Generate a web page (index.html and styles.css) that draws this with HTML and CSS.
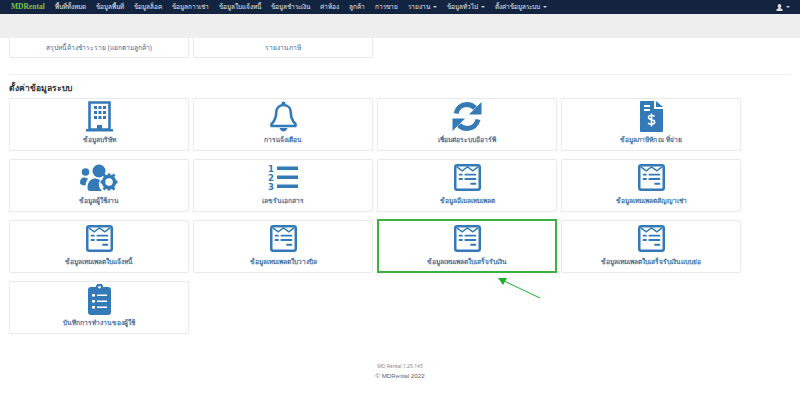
FILE: index.html
```html
<!DOCTYPE html>
<html lang="th">

<head>
    <meta charset="UTF-8">
    <meta name="viewport" content="width=device-width, initial-scale=1.0">
    <title>MDRental</title>
    <link rel="stylesheet" href="styles.css">
</head>

<body>
    <svg class="defs" width="0" height="0">
        <symbol id="tpl" viewBox="0 0 28 28">
            <rect x="1.300" y="1.300" width="25.400" height="25.400" rx="2" fill="none" stroke="#337ab7" stroke-width="2.600"/>
            <path d="M3 3l5.500 4 5.500-4 5.500 4L25 3" fill="none" stroke="#337ab7" stroke-width="1.600"/>
            <path d="M5 10h4v2H5zM11 10h12v2H11zM5 14.500h4v2H5zM11 14.500h12v2H11zM17 19.500h6v2h-6z" fill="#337ab7"/>
        </symbol>
    </svg>

    <nav class="navbar">
        <a class="brand">MDRental</a>
        <a>พื้นที่ทั้งหมด</a>
        <a>ข้อมูลพื้นที่</a>
        <a>ข้อมูลล็อค</a>
        <a>ข้อมูลการเช่า</a>
        <a>ข้อมูลใบแจ้งหนี้</a>
        <a>ข้อมูลชำระเงิน</a>
        <a>ค่าห้อง</a>
        <a>ลูกค้า</a>
        <a>การขาย</a>
        <a class="caret">รายงาน</a>
        <a class="caret">ข้อมูลทั่วไป</a>
        <a class="caret">ตั้งค่าข้อมูลระบบ</a>
        <a class="caret user">
            <svg width="7" height="7" viewBox="0 0 14 14"><path d="M7 0a3.500 3.500 0 0 1 3.500 3.800c0 2-1 3.200-1.500 3.700v1l4 2v3.500H1V10.500l4-2v-1C4.500 7 3.500 5.800 3.500 3.800A3.500 3.500 0 0 1 7 0z" fill="#ddd"/></svg>
        </a>
    </nav>
    <div class="subbar"></div>

    <main class="content">
        <div class="grid cut">
            <a class="card">สรุปหนี้ค้างชำระราย (แยกตามลูกค้า)</a>
            <a class="card">รายงานภาษี</a>
        </div>
        <hr class="line">
        <h4 class="title">ตั้งค่าข้อมูลระบบ</h4>
        <div class="grid">
            <a class="card">
                <span class="icon">
                    <svg width="27" height="31" viewBox="0 0 27 31">
                        <path d="M3.500 1.500h20v27h-20z" fill="none" stroke="#337ab7" stroke-width="2.600"/>
                        <path d="M0 28h27v2.500H0z" fill="#337ab7"/>
                        <path d="M8 5h3v3H8zM12.500 5h3v3h-3zM17 5h3v3h-3zM8 10h3v3H8zM12.500 10h3v3h-3zM17 10h3v3h-3zM8 15h3v3H8zM12.500 15h3v3h-3zM17 15h3v3h-3zM11 24h5v5h-5z" fill="#337ab7"/>
                    </svg>
                </span>
                ข้อมูลบริษัท
            </a>
            <a class="card">
                <span class="icon">
                    <svg width="27" height="31" viewBox="0 0 27 31">
                        <path d="M13.500 4c-4.700 0-7.300 3.500-7.300 7.500 0 6-2 9-4.700 11.500v2h24v-2c-2.700-2.500-4.700-5.500-4.700-11.500C20.800 7.500 18.200 4 13.500 4z" fill="none" stroke="#337ab7" stroke-width="2.600" stroke-linejoin="round"/>
                        <circle cx="13.500" cy="2.500" r="2" fill="#337ab7"/>
                        <path d="M9.500 27h8c-.7 2.300-2.200 3.500-4 3.500s-3.300-1.200-4-3.500z" fill="#337ab7"/>
                    </svg>
                </span>
                การแจ้งเตือน
            </a>
            <a class="card">
                <span class="icon">
                    <svg width="30" height="31" viewBox="0 0 30 31">
                        <path d="M4 12.500C5.200 7 9.500 3.500 15 3.500c3.300 0 6 1.300 8 3.500" fill="none" stroke="#337ab7" stroke-width="5"/>
                        <path d="M29.500 1v12.500H17z" fill="#337ab7"/>
                        <path d="M26 18.500c-1.200 5.500-5.500 9-11 9-3.300 0-6-1.300-8-3.500" fill="none" stroke="#337ab7" stroke-width="5"/>
                        <path d="M.5 30V17.500H13z" fill="#337ab7"/>
                    </svg>
                </span>
                เชื่อมต่อระบบอีอาร์พี
            </a>
            <a class="card">
                <span class="icon">
                    <svg width="23" height="31" viewBox="0 0 23 31">
                        <path d="M1 0h13v8h9v22a1 1 0 0 1-1 1H1a1 1 0 0 1-1-1V1a1 1 0 0 1 1-1zM16 0l7 6h-7z" fill="#337ab7"/>
                        <path d="M4 4h6v2H4zM4 8h6v2H4z" fill="#fff"/>
                        <path d="M14.500 15.500c-.6-.9-1.600-1.300-3-1.300-1.800 0-3 .8-3 2.100 0 3.200 6.200 1.700 6.200 4.800 0 1.300-1.300 2.200-3.200 2.200-1.500 0-2.700-.5-3.300-1.500M11.500 12.500v13" fill="none" stroke="#fff" stroke-width="1.600"/>
                    </svg>
                </span>
                ข้อมูลภาษีหัก ณ ที่จ่าย
            </a>

            <a class="card">
                <span class="icon">
                    <svg width="38" height="27" viewBox="0 0 38 27">
                        <circle cx="5.500" cy="8" r="3.800" fill="#337ab7"/>
                        <path d="M0 19c0-4 2-5.500 4-5.500 1.500 0 3 .5 4 1.500-1.200 1.500-2.500 4-2.500 6.500C2.500 21.500 0 20.500 0 19z" fill="#337ab7"/>
                        <circle cx="19" cy="7" r="6.500" fill="#337ab7"/>
                        <path d="M7.500 24c0-6 3.500-9.500 7-9.500 2 0 4 .7 5.500 1.500-1.500 2.500-1.500 6 0 8.500l2 2.500H10c-1.500 0-2.500-1-2.500-3z" fill="#337ab7"/>
                        <circle cx="29" cy="18" r="5.500" fill="none" stroke="#337ab7" stroke-width="3.500"/>
                        <path d="M27.500 9.500h3v3h-3zM27.500 23.500h3v3h-3zM20.500 16.500h3v3h-3zM34.500 16.500h3v3h-3z" fill="#337ab7"/>
                        <path d="M22.500 11.500l2-2 2.500 2.500-2 2zM31 12l2.500-2.500 2 2-2.500 2.500zM22.500 24.500l2.500-2.500 2 2-2.500 2.500zM31 24l2-2 2.500 2.500-2 2z" fill="#337ab7"/>
                    </svg>
                </span>
                ข้อมูลผู้ใช้งาน
            </a>
            <a class="card">
                <span class="icon">
                    <svg width="30" height="28" viewBox="0 0 30 28">
                        <path d="M9 2.500h21v3.500H9zM9 11.500h21v3.500H9zM9 20.500h21v3.500H9z" fill="#337ab7"/>
                        <text class="num" x="0" y="8">1</text>
                        <text class="num" x="0" y="17">2</text>
                        <text class="num" x="0" y="26">3</text>
                    </svg>
                </span>
                เลขรันเอกสาร
            </a>
            <a class="card">
                <span class="icon"><svg width="27" height="27"><use href="#tpl"/></svg></span>
                ข้อมูลอีเมลเทมเพลต
            </a>
            <a class="card">
                <span class="icon"><svg width="27" height="27"><use href="#tpl"/></svg></span>
                ข้อมูลเทมเพลตสัญญาเช่า
            </a>

            <a class="card">
                <span class="icon"><svg width="27" height="27"><use href="#tpl"/></svg></span>
                ข้อมูลเทมเพลตใบแจ้งหนี้
            </a>
            <a class="card">
                <span class="icon"><svg width="27" height="27"><use href="#tpl"/></svg></span>
                ข้อมูลเทมเพลตใบวางบิล
            </a>
            <a class="card active">
                <span class="icon"><svg width="27" height="27"><use href="#tpl"/></svg></span>
                ข้อมูลเทมเพลตใบเสร็จรับเงิน
            </a>
            <a class="card">
                <span class="icon"><svg width="27" height="27"><use href="#tpl"/></svg></span>
                ข้อมูลเทมเพลตใบเสร็จรับเงินแบบย่อ
            </a>

            <a class="card">
                <span class="icon">
                    <svg width="23" height="31" viewBox="0 0 23 31">
                        <path d="M3 3h5a3.500 3.500 0 0 1 7 0h5a3 3 0 0 1 3 3v22a3 3 0 0 1-3 3H3a3 3 0 0 1-3-3V6a3 3 0 0 1 3-3z" fill="#337ab7"/>
                        <circle cx="11.500" cy="3.300" r="1.300" fill="#fff"/>
                        <path d="M4 10h3v2.500H4zM4 16h3v2.500H4zM4 22h3v2.500H4zM9 10.400h10v1.700H9zM9 16.400h10v1.700H9zM9 22.400h10v1.700H9z" fill="#fff"/>
                    </svg>
                </span>
                บันทึกการทำงานของผู้ใช้
            </a>
        </div>

        <footer class="footer">
            <small>MD Rental 1.25.145</small>
            <p>© MDRental 2022</p>
        </footer>

        <svg class="arrow" width="46" height="24" viewBox="0 0 46 24">
            <path d="M44 22L8 5" stroke="#1fae2b" stroke-width="1"/>
            <path d="M2 2l9 0-4 7z" fill="#1fae2b"/>
        </svg>
    </main>
</body>

</html>
```

FILE: styles.css
```css
html, body {
    margin: 0;
    height: 100%;
    overflow: hidden;
    background: #fff;
    font-family: "Noto Sans", "Liberation Sans", sans-serif;
}

.defs {
    position: absolute;
}

.navbar {
    height: 14px;
    padding: 0 10px 0 11px;
    display: flex;
    align-items: center;
    gap: 10px;
    background: #122440;
    color: #e4e8ee;
    font-size: 6.500px;
    line-height: 14px;
    white-space: nowrap;
}

.brand {
    color: #7fc14e;
    font-family: "Liberation Serif", serif;
    font-weight: bold;
    font-size: 7.500px;
}

.caret::after {
    content: "";
    display: inline-block;
    margin-left: 3px;
    vertical-align: middle;
    border-top: 2px solid #ccd;
    border-left: 2px solid transparent;
    border-right: 2px solid transparent;
}

.user {
    margin-left: auto;
    display: flex;
    align-items: center;
}

.subbar {
    height: 24px;
    background: #eee;
}

.content {
    position: relative;
    padding: 0 9px;
}

.grid {
    display: grid;
    grid-template-columns: repeat(4, 180px);
    column-gap: 4px;
    row-gap: 8px;
}

.card {
    box-sizing: border-box;
    height: 53px;
    display: flex;
    flex-direction: column;
    align-items: center;
    border: 1px solid #eaeaea;
    border-radius: 2px;
    box-shadow: 0 0 1px #f2f2f2;
    background: #fff;
    color: #4a7199;
    font-size: 6.600px;
    font-weight: bold;
    line-height: 9px;
}

.cut .card {
    height: 20px;
    padding-top: 5px;
    border-top: none;
    font-weight: normal;
    font-size: 6.600px;
    color: #3f6c99;
    border-radius: 0 0 2px 2px;
}

.icon {
    height: 35px;
    margin-bottom: 1px;
    display: flex;
    align-items: center;
    justify-content: center;
    flex-shrink: 0;
}

.num {
    fill: #337ab7;
    font-family: "DejaVu Sans", sans-serif;
    font-weight: bold;
    font-size: 8.500px;
}

.active {
    height: 54px;
    margin-top: -1px;
    border: 2px solid #3cb043;
    border-radius: 0;
}

.line {
    margin: 16px 0 0;
    border: none;
    border-top: 1px solid #f2f2f2;
}

.title {
    margin: 6px 0 4px;
    color: #333;
    font-size: 8.500px;
    font-weight: bold;
    line-height: 13px;
}

.footer {
    margin-top: 29px;
    text-align: center;
    color: #666;
}

.footer small {
    display: block;
    color: #888;
    font-size: 5px;
    line-height: 7px;
}

.footer p {
    margin: 1px 0 0;
    font-family: "Liberation Sans", sans-serif;
    font-size: 6.200px;
    line-height: 9px;
}

.arrow {
    position: absolute;
    left: 496px;
    top: 238px;
}
```
